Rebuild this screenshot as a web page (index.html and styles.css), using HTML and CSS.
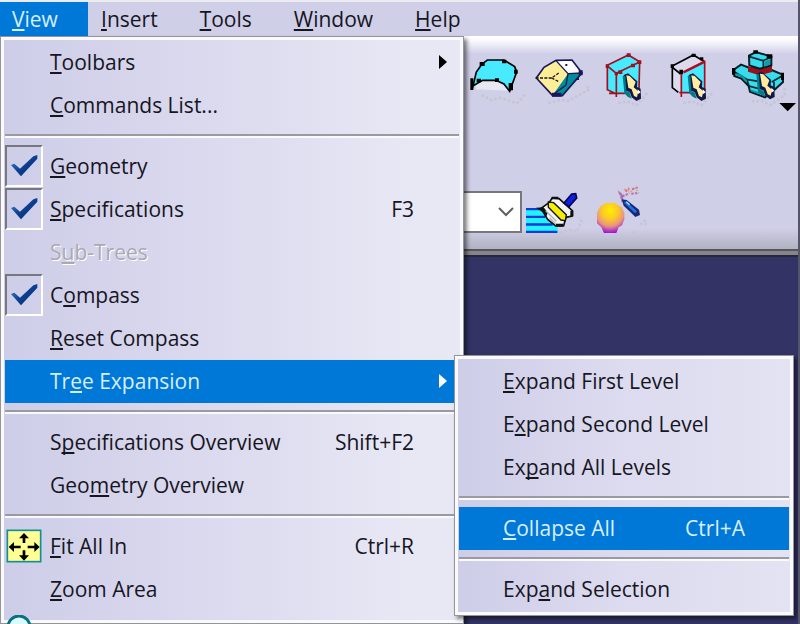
FILE: index.html
```html
<!DOCTYPE html>
<html lang="en">
<head>
  <meta charset="UTF-8">
  <meta name="viewport" content="width=device-width, initial-scale=1.0">
  <title>View Menu</title>
  <link rel="stylesheet" href="styles.css">
</head>
<body>
  <svg class="defs" width="0" height="0" aria-hidden="true">
    <defs>
      <linearGradient id="tickFill" x1="0" y1="0" x2="1" y2="1">
        <stop offset="0" stop-color="#4a86d8"/>
        <stop offset="0.5" stop-color="#0c3f92"/>
        <stop offset="1" stop-color="#062468"/>
      </linearGradient>
      <radialGradient id="ballFill" cx="0.48" cy="0.25" r="0.75">
        <stop offset="0" stop-color="#ffee00"/>
        <stop offset="0.4" stop-color="#fcc828"/>
        <stop offset="0.7" stop-color="#e89480"/>
        <stop offset="1" stop-color="#a010d8"/>
      </radialGradient>
      <symbol id="tick" viewBox="0 0 84 66">
        <path d="M3 30 L13 26 L30 41 L70 4 L82 0 L82 11 L33 64 Z" fill="url(#tickFill)"/>
      </symbol>
      <symbol id="pointer" viewBox="170 95 65 90">
        <path d="M176 105 L189 100 L217 124 L216 141 L227 146 L228 176 L214 183 L200 172 L194 156 L181 152 Z" fill="#101848"/>
        <path d="M184 106 L194 108 L212 126 L206 142 L220 154 L216 172 L207 168 L200 148 L190 143 Z" fill="#ffeca0"/>
        <path d="M173 108 L181 108 L184 154 L194 157 L200 176 L188 170 L178 160 Z" fill="#007c88"/>
        <path d="M218 148 L227 157 L218 163 Z" fill="#fff"/>
      </symbol>
    </defs>
  </svg>

  <nav class="menubar">
    <button class="menubar-item active"><u>V</u>iew</button>
    <button class="menubar-item"><u>I</u>nsert</button>
    <button class="menubar-item"><u>T</u>ools</button>
    <button class="menubar-item"><u>W</u>indow</button>
    <button class="menubar-item"><u>H</u>elp</button>
  </nav>

  <div class="toolbar">
    <div class="tool-row">
      <button class="tool" aria-label="Join">
        <svg viewBox="18 30 168 168">
          <path class="smudge" d="M65 165 L95 180 L120 173 L170 190 L198 160"/>
          <path d="M35 146 L48 96 L66 72 L82 60 L132 60 L164 80 L170 96 L150 155 L132 131 L108 120 L68 120 L46 132 Z" fill="#48eaff"/>
          <path d="M68 124 L108 124 L130 134 L144 152 L48 148 L48 132 Z" fill="#e8e8f4"/>
          <path d="M37 146 L49 96 L66 72 L82 60 L132 60 L164 80 L170 96 L149 154 L132 132 L108 121 L68 121 L38 138" fill="none" stroke="#000" stroke-width="5"/>
          <path d="M31 115h9v35h-9z M59 66h15v12h-15z M126 59h13v11h-13z M50 116h13v11h-13z M146 129h13v22h-13z M105 115h12v11h-12z M162 89h11v12h-11z" fill="#000"/>
        </svg>
      </button>
      <button class="tool" aria-label="Close Surface">
        <svg viewBox="213 30 168 168">
          <path class="smudge" d="M265 190 L300 180 L325 183 L390 147 L375 135"/>
          <path d="M288 60 L336 60 L366 99 L323 101 Z" fill="#fff"/>
          <path d="M323 101 L366 99 L307 167 L278 166 Z" fill="#008c98"/>
          <path d="M288 62 L324 101 L278 164 L232 114 L250 86 Z" fill="#ffee98"/>
          <path d="M288 61 L336 60 L366 99 L307 167 L278 167 L229 114 L252 82 Z" fill="none" stroke="#181858" stroke-width="5"/>
          <path d="M288 62 L324 101 L366 99 M324 101 L318 135 L278 164" fill="none" stroke="#181858" stroke-width="4"/>
          <path d="M227 114 H275 L296 99 M275 114 L298 126" fill="none" stroke="#181818" stroke-width="4" stroke-dasharray="9 4"/>
          <path d="M276 158h28v12h-28z M356 91h12v15h-12z M316 72h6v6h-6z M350 114h7v6h-7z" fill="#181858"/>
        </svg>
      </button>
      <button class="tool" aria-label="Thick Surface">
        <svg viewBox="93 30 168 168">
          <path class="smudge" d="M160 190 L187 184 L214 196 L250 155"/>
          <path d="M127 76 L180 47 L194 46 L224 65 L222 150 L154 162 L127 149 Z" fill="#48eaff"/>
          <path d="M127 76 L190 45 L224 65 L222 148 M224 66 L154 100 L127 78 L127 149 L154 162 L154 100 M132 160 H180 M154 160 V171" fill="none" stroke="#a01020" stroke-width="5"/>
          <path d="M185 40h12v11h-12z M217 61h12v11h-12z M160 91h12v11h-12z M198 71h12v11h-12z M122 73h10v11h-10z M149 96h10v10h-10z" fill="#a01020"/>
          <use href="#pointer" x="170" y="95" width="65" height="90"/>
        </svg>
      </button>
      <button class="tool" aria-label="Sew Surface">
        <svg viewBox="93 30 168 168">
          <path class="smudge" d="M160 190 L187 184 L214 196 L250 155"/>
          <path d="M127 78 L190 45 L224 65 L154 102 V162 L127 149 Z" fill="#dcdbed"/>
          <path d="M154 102 L224 67 L222 150 L154 160 Z" fill="#48eaff"/>
          <path d="M152 102 L127 82 V143 L145 157 M127 78 L190 45 L224 65" fill="none" stroke="#000" stroke-width="5"/>
          <path d="M185 41h12v10h-12z M148 89h11v14h-11z M122 73h10v11h-10z M210 52h10v9h-10z" fill="#000"/>
          <path d="M154 102 V171 M224 62 V150 M148 158 H180" fill="none" stroke="#a01020" stroke-width="5"/>
          <path d="M160 97 L224 65" fill="none" stroke="#b00c20" stroke-width="8"/>
          <use href="#pointer" x="170" y="95" width="65" height="90"/>
        </svg>
      </button>
      <button class="tool tool-wide" aria-label="Boolean Operations">
        <svg viewBox="288 30 216 168">
          <path class="smudge" d="M365 185 L395 182 L420 195 L465 165 L464 145"/>
          <path d="M310 90 L333 74 L357 83 L425 90 L458 104 L459 126 L432 151 L405 172 L360 155 L356 138 L334 116 L313 108 Z" fill="#38dcec" stroke="#001c24" stroke-width="6"/>
          <path d="M314 96 L350 118 L385 124 M425 126 L456 108 M350 118 L357 138 L386 146 M432 126 V150" fill="none" stroke="#002830" stroke-width="5"/>
          <path d="M318 103 L336 108 L350 124 M362 151 L390 160" fill="none" stroke="#0c98a4" stroke-width="6"/>
          <path d="M354 79 L385 88 L426 76 V96 L388 106 L354 95 Z" fill="#98101e"/>
          <path d="M357 47 L378 36 L424 50 L424 76 L390 86 L358 76 Z" fill="#38dcec" stroke="#001c24" stroke-width="6"/>
          <path d="M358 50 L398 62 L424 52 M400 62 V84" fill="none" stroke="#002830" stroke-width="5"/>
          <path d="M403 64 L420 58 V74 L403 80 Z" fill="#109ca8"/>
          <path d="M370 31h14v10h-14z M410 43h17v12h-17z M306 84h10v20h-10z M453 98h9v22h-9z" fill="#000"/>
          <use href="#pointer" x="376" y="90" width="65" height="90"/>
          <path d="M448 189 H498 L473 214 Z" fill="#000"/>
        </svg>
      </button>
    </div>
    <div class="tool-row tool-row-style">
      <div class="style-box">
        <select class="style-select" aria-label="Style">
          <option></option>
        </select>
        <svg class="chevron" viewBox="0 0 16 10" aria-hidden="true"><path d="M1 1 L8 8 L15 1" fill="none" stroke="#606060" stroke-width="2"/></svg>
      </div>
      <button class="tool" aria-label="Painter">
        <svg viewBox="207 12 168 168">
          <path class="smudge" d="M315 158 L345 150 L365 155 L380 125 L374 112"/>
          <path d="M213 84 H258 L308 140 V159 H213 Z" fill="#20f4ff"/>
          <path d="M213 84h46v7h-46z M213 107h58v7h-58z M213 130h80v7h-80z M213 152h94v7h-94z" fill="#1838d8"/>
          <path d="M258 85 L282 68 L292 54 L312 56 L328 70 L352 92 L352 108 L333 112 L326 137 L302 138 L278 118 Z" fill="#f4f4f4" stroke="#101010" stroke-width="5"/>
          <path d="M280 66 L296 68 L334 104 L331 122 L318 120 L280 82 Z" fill="#f4ee00" stroke="#101010" stroke-width="4"/>
          <path d="M243 83 L266 82 L278 98 L275 108 L262 96 Z M290 50h20v8h-20z M346 92h9v16h-9z M303 131h22v9h-22z" fill="#101010"/>
          <path d="M327 69 L350 42 L362 41 L365 54 L342 80 Z" fill="#1020e0" stroke="#080850" stroke-width="5"/>
          <path d="M272 92 L304 124 M284 114 L302 132" stroke="#b0b0b0" stroke-width="4"/>
        </svg>
      </button>
      <button class="tool" aria-label="Wizard">
        <svg viewBox="411 12 168 168">
          <path class="smudge" d="M530 158 H545 M555 132 H576 M565 122 H578"/>
          <path d="M452 69 H480 L500 82 L508 98 V118 L501 136 L491 142 L484 159 H447 L439 142 L426 130 V98 L435 80 Z" fill="url(#ballFill)"/>
          <path d="M494 39 L506 47 L501 60 Z M511 34 L523 25 M531 28 L548 22 M529 41 L552 39 M512 45 L523 39" fill="#7474c4" stroke="#b870a8" stroke-width="6" stroke-dasharray="7 4"/>
          <path d="M507 28 L531 35 M540 22 L547 33" stroke="#f09860" stroke-width="5" stroke-dasharray="6 4"/>
          <path d="M500 58 L515 60 L552 89 L555 105 L541 111 L525 95 L506 77 Z" fill="#182878"/>
          <path d="M510 66 L543 97" stroke="#2070e0" stroke-width="8"/>
          <path d="M514 65 L524 74" stroke="#a0e8f4" stroke-width="4"/>
        </svg>
      </button>
    </div>
  </div>

  <main class="viewport"></main>

  <div class="menu view-menu" role="menu">
    <button class="item"><span><u>T</u>oolbars</span><i class="arrow"></i></button>
    <button class="item"><span><u>C</u>ommands List...</span></button>
    <hr>
    <label class="item"><input type="checkbox" checked><svg class="tick"><use href="#tick"/></svg><span><u>G</u>eometry</span></label>
    <label class="item"><input type="checkbox" checked><svg class="tick"><use href="#tick"/></svg><span><u>S</u>pecifications</span><kbd>F3</kbd></label>
    <button class="item" disabled><span>S<u>u</u>b-Trees</span></button>
    <label class="item"><input type="checkbox" checked><svg class="tick"><use href="#tick"/></svg><span>C<u>o</u>mpass</span></label>
    <button class="item"><span><u>R</u>eset Compass</span></button>
    <div class="has-submenu">
      <button class="item selected"><span>Tr<u>e</u>e Expansion</span><i class="arrow"></i></button>
      <div class="menu submenu" role="menu">
        <button class="item"><span><u>E</u>xpand First Level</span></button>
        <button class="item"><span>E<u>x</u>pand Second Level</span></button>
        <button class="item"><span>Ex<u>p</u>and All Levels</span></button>
        <hr>
        <button class="item selected"><span><u>C</u>ollapse All</span><kbd>Ctrl+A</kbd></button>
        <hr>
        <button class="item"><span>Exp<u>a</u>nd Selection</span></button>
      </div>
    </div>
    <hr>
    <button class="item"><span>S<u>p</u>ecifications Overview</span><kbd>Shift+F2</kbd></button>
    <button class="item"><span>Geo<u>m</u>etry Overview</span></button>
    <hr>
    <button class="item">
      <svg class="item-icon" viewBox="18 56 108 102">
        <rect x="22" y="60" width="100" height="94" fill="#ffff94" stroke="#109098" stroke-width="5"/>
        <path d="M72 68 L87 84 H76 V98 H68 V84 H57 Z M72 151 L87 135 H76 V120 H68 V135 H57 Z M26 110 L42 95 V106 H62 V114 H42 V125 Z M119 110 L103 95 V106 H83 V114 H103 V125 Z" fill="#000"/>
      </svg>
      <span><u>F</u>it All In</span><kbd>Ctrl+R</kbd>
    </button>
    <button class="item"><span><u>Z</u>oom Area</span></button>
    <button class="item" aria-label="Zoom In Out">
      <svg class="item-icon" viewBox="0 0 36 34">
        <circle cx="13" cy="12" r="11" fill="#d8fcff" stroke="#087080" stroke-width="3"/>
        <path d="M21 20 L32 30" stroke="#083840" stroke-width="4"/>
      </svg>
    </button>
  </div>
</body>
</html>
```

FILE: styles.css
```css
* {
  box-sizing: border-box;
}
body {
  margin: 0;
  height: 100vh;
  overflow: hidden;
  position: relative;
  display: flex;
  flex-direction: column;
  font-family: "Open Sans", "Noto Sans", sans-serif;
  font-size: 21px;
  color: #16161e;
  background: #333366;
  border-right: 2px solid #55556a;
}
button {
  font: inherit;
  color: inherit;
  background: none;
  border: none;
  padding: 0;
}
u {
  text-decoration-thickness: 2px;
  text-underline-offset: 2px;
  text-decoration-skip-ink: none;
}
.defs {
  position: absolute;
}

/* menu bar */
.menubar {
  display: flex;
  height: 36px;
  background: #d0cfe8;
  border-top: 2px solid #ececf2;
}
.menubar-item {
  padding: 0 21px;
  line-height: 32px;
}
.menubar-item.active {
  width: 88px;
  margin-right: -8px;
  padding: 0 12px;
  text-align: left;
  color: #d8efff;
  background: #0078d7;
}

/* toolbar */
.toolbar {
  height: 219px;
  padding-top: 14px;
  background: linear-gradient(#fff 0, #fbfbfd 4px, #d0cfe8 18px, #d0cfe8 192px, #b0b0c0 214px);
  border-bottom: 4px solid #85858a;
  box-shadow: inset 0 -2px #55555c;
}
.tool-row {
  display: flex;
  gap: 9px;
  padding-left: 466px;
}
.tool-row-style {
  align-items: center;
  gap: 12px;
  margin-top: 78px;
  padding-left: 380px;
}
.tool {
  width: 56px;
  height: 56px;
}
.tool-wide {
  width: 72px;
}
.tool svg {
  display: block;
  width: 100%;
  height: 100%;
  overflow: visible;
}
.smudge {
  fill: none;
  stroke: #c6c5d4;
  stroke-width: 8px;
  stroke-dasharray: 8px 6px;
}
.style-box {
  position: relative;
  width: 142px;
  margin-right: -10px;
}
.style-select {
  display: block;
  width: 100%;
  height: 42px;
  appearance: none;
  background: #fff;
  border: 2px solid #77777d;
  border-radius: 0;
}
.chevron {
  position: absolute;
  top: 16px;
  right: 8px;
  width: 16px;
  height: 10px;
  pointer-events: none;
}
.viewport {
  flex: 1;
  border-top: 2px solid #26263e;
}

/* drop-down menus */
.menu {
  position: absolute;
  border: 1px solid #94949a;
  background: linear-gradient(90deg, #cecde8, #dcdbef 50%, #e8e8f5 90%);
  box-shadow: inset 0 0 0 3px #fafafc, 3px 3px 4px rgba(0, 0, 0, 0.5);
  padding: 4px;
}
.view-menu {
  top: 36px;
  left: 0;
  width: 464px;
  height: calc(100% - 36px);
}
.submenu {
  top: -5px;
  left: 449px;
  width: 340px;
  background: linear-gradient(90deg, #cecde8, #dcdbef 50%, #e4e3f3);
}
.submenu .item {
  padding-left: 44px;
  padding-right: 44px;
}
.has-submenu {
  position: relative;
}
.menu hr {
  height: 18px;
  margin: 0;
  border: solid transparent;
  border-width: 7px 0;
  background: linear-gradient(#9a9aa0 50%, #fafafc 50%) padding-box;
}
.item {
  position: relative;
  display: flex;
  align-items: center;
  justify-content: space-between;
  width: 100%;
  height: 43px;
  padding: 0 45px 2px;
  text-align: left;
  white-space: nowrap;
}
.item.selected {
  color: #d8efff;
  background: #0078d7;
}
.item:disabled {
  color: #a9a9b4;
  text-shadow: 1px 1px #fff;
}
.item kbd {
  font: inherit;
}
.item input {
  position: absolute;
  top: 0;
  left: 0;
  width: 38px;
  height: 42px;
  margin: 0;
  appearance: none;
  border: 2px solid;
  border-color: #77777f #fff #fff #77777f;
}
.tick {
  position: absolute;
  left: 5px;
  width: 28px;
  height: 22px;
}
.item input:not(:checked) + .tick {
  display: none;
}
.item-icon {
  position: absolute;
  left: 1px;
  width: 36px;
  height: 34px;
}
.arrow {
  position: absolute;
  right: 12px;
  border: 7px solid transparent;
  border-left: 8px solid #000;
  border-right: none;
}
.selected .arrow {
  border-left-color: #fff;
}
```
